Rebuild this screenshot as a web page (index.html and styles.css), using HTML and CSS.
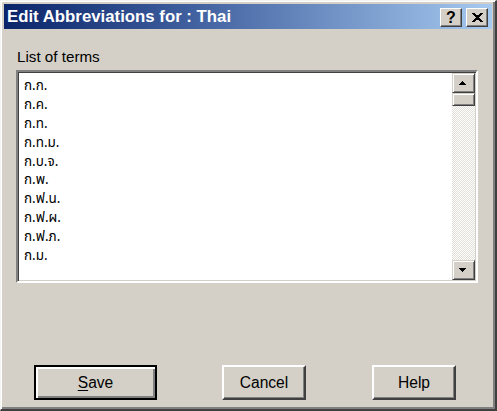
FILE: index.html
```html
<!DOCTYPE html>
<html>
<head>
<meta charset="utf-8">
<link rel="stylesheet" href="styles.css">
</head>
<body>
<div class="window">
  <div class="titlebar">
    <span class="title">Edit Abbreviations for : Thai</span>
    <div class="tbtns">
      <div class="tbtn help-q">?</div>
      <div class="tbtn">
        <svg width="11" height="9" viewBox="0 0 11 9" shape-rendering="crispEdges">
          <path d="M0 0h3v1h1v1h3v-1h1v-1h3v1h-1v1h-1v1h-1v1h-1v1h1v1h1v1h1v1h1v1h-3v-1h-1v-1h-3v1h-1v1h-3v-1h1v-1h1v-1h1v-1h1v-1h-1v-1h-1v-1h-1v-1h-1z" fill="#000"/>
        </svg>
      </div>
    </div>
  </div>
  <div class="content">
    <div class="label">List of terms</div>
    <div class="listbox">
      <ul class="items">
        <li>ก.ก.</li>
        <li>ก.ค.</li>
        <li>ก.ท.</li>
        <li>ก.ท.ม.</li>
        <li>ก.บ.จ.</li>
        <li>ก.พ.</li>
        <li>ก.ฟ.น.</li>
        <li>ก.ฟ.ผ.</li>
        <li>ก.ฟ.ภ.</li>
        <li>ก.ม.</li>
      </ul>
      <div class="scrollbar">
        <div class="sbtn">
          <svg width="7" height="4" viewBox="0 0 7 4" shape-rendering="crispEdges"><path d="M3 0h1v1h1v1h1v1h1v1h-7v-1h1v-1h1v-1h1z" fill="#000"/></svg>
        </div>
        <div class="thumb"></div>
        <div class="track"></div>
        <div class="sbtn">
          <svg width="7" height="4" viewBox="0 0 7 4" shape-rendering="crispEdges"><path d="M0 0h7v1h-1v1h-1v1h-1v1h-1v-1h-1v-1h-1v-1h-1z" fill="#000"/></svg>
        </div>
      </div>
    </div>
    <div class="buttons">
      <button class="btn default"><span><u>S</u>ave</span></button>
      <button class="btn">Cancel</button>
      <button class="btn">Help</button>
    </div>
  </div>
</div>
</body>
</html>
```
FILE: styles.css
```css
html, body {
  margin: 0;
  padding: 0;
  background: #d4d0c8;
}
.window {
  width: 497px;
  height: 411px;
  box-sizing: border-box;
  background: #d4d0c8;
  border-style: solid;
  border-width: 1px 2px 2px 1px;
  border-color: #f4f4f0 #404040 #404040 #f4f4f0;
  box-shadow: inset 1px 1px 0 #fff, inset -2px -2px 0 #808080;
  padding: 3px 3px 2px 3px;
  display: flex;
  flex-direction: column;
  font-family: "Liberation Sans", Arial, sans-serif;
  color: #000;
}
.titlebar {
  height: 25px;
  flex: none;
  display: flex;
  align-items: center;
  justify-content: space-between;
  background: linear-gradient(to right, #0a246a 0%, #3a5a9a 35%, #a6caf0 100%);
  padding: 0 4px 0 3px;
}
.title {
  color: #fff;
  font-weight: bold;
  font-size: 16.8px;
  line-height: 25px;
  white-space: nowrap;
}
.tbtns {
  display: flex;
  gap: 4px;
  margin-top: 1px;
}
.tbtn {
  width: 22px;
  height: 19px;
  box-sizing: border-box;
  background: #d4d0c8;
  border-style: solid;
  border-width: 1px;
  border-color: #fff #404040 #404040 #fff;
  box-shadow: inset -1px -1px 0 #808080;
  display: flex;
  align-items: center;
  justify-content: center;
}
.tbtn.help-q {
  font-weight: bold;
  font-size: 16px;
  line-height: 17px;
}
.content {
  flex: 1;
  display: flex;
  flex-direction: column;
  padding: 19px 14px 0 12px;
}
.label {
  font-size: 15.2px;
  line-height: 17px;
  margin-left: 1px;
}
.listbox {
  margin-top: 5px;
  height: 213px;
  box-sizing: border-box;
  background: #fff;
  border-style: solid;
  border-width: 2px;
  border-color: #808080 #fff #fff #808080;
  box-shadow: inset 1px 1px 0 #404040, inset -1px -1px 0 #d4d0c8;
  padding: 1px;
  display: flex;
}
.items {
  list-style: none;
  margin: 0;
  padding: 4px 0 0 5px;
  flex: 1;
  font-family: "Noto Sans Thai", "Tahoma", "Loma", "Garuda", "Norasi", "DejaVu Sans", sans-serif;
  font-size: 13.5px;
  line-height: 18.9px;
}
.items li {
  height: 18.9px;
}
.scrollbar {
  width: 23px;
  flex: none;
  display: flex;
  flex-direction: column;
}
.sbtn {
  height: 20px;
  flex: none;
  box-sizing: border-box;
  background: #d4d0c8;
  border-style: solid;
  border-width: 1px;
  border-color: #d4d0c8 #404040 #404040 #d4d0c8;
  box-shadow: inset 1px 1px 0 #fff, inset -1px -1px 0 #808080;
  display: flex;
  align-items: center;
  justify-content: center;
  padding-right: 3px;
}
.thumb {
  height: 13px;
  flex: none;
  box-sizing: border-box;
  background: #d4d0c8;
  border-style: solid;
  border-width: 1px;
  border-color: #d4d0c8 #404040 #404040 #d4d0c8;
  box-shadow: inset 1px 1px 0 #fff, inset -1px -1px 0 #808080;
}
.track {
  flex: 1;
  background-color: #fff;
  background-image: conic-gradient(#e2dfd9 25%, #fff 0 50%, #e2dfd9 0 75%, #fff 0);
  background-size: 2px 2px;
}
.buttons {
  display: flex;
  align-items: flex-start;
  margin-top: 82px;
  padding-left: 18px;
}
.btn {
  height: 35px;
  width: 84px;
  box-sizing: border-box;
  background: #d4d0c8;
  border-style: solid;
  border-width: 2px;
  border-color: #fff #404040 #404040 #fff;
  box-shadow: inset -1px -1px 0 #808080;
  font-family: "Liberation Sans", Arial, sans-serif;
  font-size: 15.6px;
  color: #000;
  padding: 0;
  margin: 0;
}
.btn + .btn {
  margin-left: 65px;
}
.btn + .btn + .btn {
  margin-left: 66px;
}
.btn.default {
  width: 123px;
  border: 2px solid #000;
  box-shadow: inset 2px 2px 0 #fff, inset -2px -2px 0 #808080;
}
.btn u {
  text-decoration-thickness: 1px;
  text-underline-offset: 2px;
}
```
